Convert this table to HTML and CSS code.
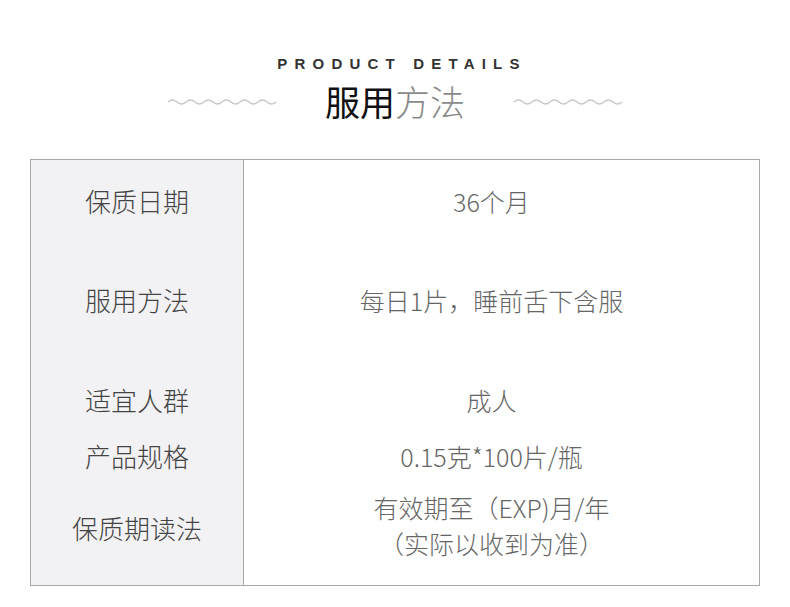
FILE: index.html
```html
<!DOCTYPE html>
<html lang="zh">
<head>
<meta charset="utf-8">
<link rel="stylesheet" href="styles.css">
</head>
<body>
<header class="head">
  <div class="en">PRODUCT DETAILS</div>
  <div class="title-row">
    <svg class="wave" width="110" height="10" viewBox="0 0 110 10"><path d="M1 5 Q5.5 1 10 5 T19 5 T28 5 T37 5 T46 5 T55 5 T64 5 T73 5 T82 5 T91 5 T100 5 T109 5" fill="none" stroke="#c9c9c9" stroke-width="1.4"/></svg>
    <h1 class="title"><span class="dark">服用</span><span class="light">方法</span></h1>
    <svg class="wave" width="110" height="10" viewBox="0 0 110 10"><path d="M1 5 Q5.5 1 10 5 T19 5 T28 5 T37 5 T46 5 T55 5 T64 5 T73 5 T82 5 T91 5 T100 5 T109 5" fill="none" stroke="#c9c9c9" stroke-width="1.4"/></svg>
  </div>
</header>
<section class="table">
  <div class="label r1">保质日期</div><div class="value r1">36个月</div>
  <div class="label r2">服用方法</div><div class="value r2">每日1片，睡前舌下含服</div>
  <div class="label r3">适宜人群</div><div class="value r3">成人</div>
  <div class="label r4">产品规格</div><div class="value r4">0.15克*100片/瓶</div>
  <div class="label r5">保质期读法</div>
  <div class="value r5 two"><div class="line">有效期至（EXP)月/年</div><div class="line">（实际以收到为准）</div></div>
</section>
</body>
</html>
```

FILE: styles.css
```css
html, body {
  margin: 0;
  padding: 0;
  background: #fff;
}
body {
  width: 790px;
  height: 607px;
  font-family: "Noto Sans CJK SC", "Noto Sans", sans-serif;
}
.head {
  padding-top: 55px;
  height: 159px;
  box-sizing: border-box;
  display: flex;
  flex-direction: column;
  align-items: center;
}
.en {
  font-family: "Liberation Sans", Arial, sans-serif;
  font-weight: bold;
  font-size: 15px;
  line-height: 18px;
  letter-spacing: 7.2px;
  color: #333;
  margin-left: 14px;
}
.title-row {
  display: flex;
  align-items: center;
  gap: 48px;
  margin-top: 6px;
}
.title {
  margin: 0;
  font-size: 35px;
  font-weight: 400;
  line-height: 44px;
}
.dark { color: #111; }
.light { color: #8a8a8a; font-weight: 300; }
.wave { display: block; margin-top: 2px; }

.table {
  margin-left: 30px;
  width: 730px;
  height: 427px;
  box-sizing: border-box;
  border: 1px solid #a8a8a8;
  display: grid;
  grid-template-columns: 213px 1fr;
  grid-template-rows: 82px 116px 84px 28px 1fr;
}
.label {
  background: #f2f2f4;
  border-right: 1px solid #a8a8a8;
  color: #444;
  font-size: 26px;
  font-weight: 300;
  display: flex;
  align-items: center;
  justify-content: center;
  line-height: 28px;
}
.value {
  color: #666;
  font-size: 25px;
  font-weight: 300;
  display: flex;
  align-items: center;
  justify-content: center;
  text-align: center;
  padding-right: 20px;
  line-height: 28px;
}
.value.two {
  flex-direction: column;
  padding-bottom: 6px;
}
.line {
  height: 36px;
  line-height: 36px;
}
```
